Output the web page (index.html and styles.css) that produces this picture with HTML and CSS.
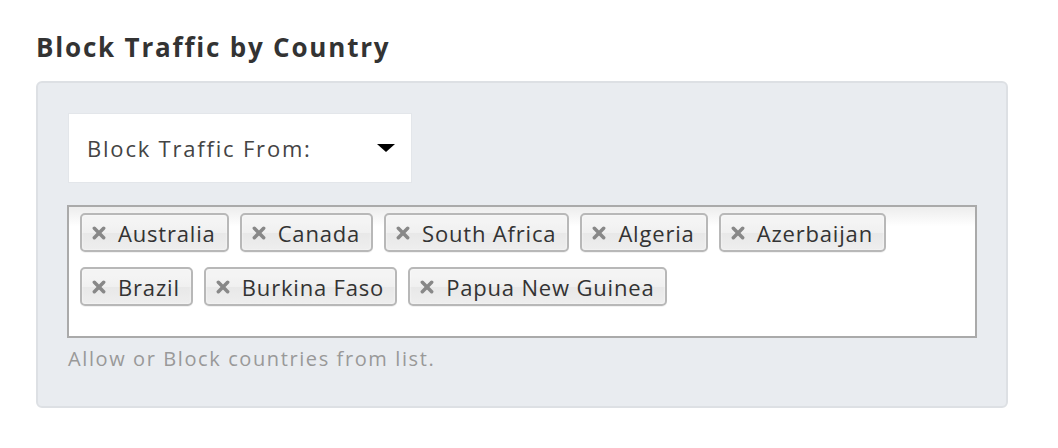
FILE: index.html
```html
<!DOCTYPE html>
<html>
<head>
<meta charset="utf-8">
<link rel="stylesheet" href="styles.css">
</head>
<body>
<h2 class="title">Block Traffic by Country</h2>
<div class="panel">
  <div class="select">
    <span class="select-label">Block Traffic From:</span>
    <span class="caret"></span>
  </div>
  <ul class="choices">
    <li class="choice"><svg class="x" viewBox="0 0 12 12"><path d="M2 2L10 10M10 2L2 10"/></svg>Australia</li>
    <li class="choice"><svg class="x" viewBox="0 0 12 12"><path d="M2 2L10 10M10 2L2 10"/></svg>Canada</li>
    <li class="choice"><svg class="x" viewBox="0 0 12 12"><path d="M2 2L10 10M10 2L2 10"/></svg>South Africa</li>
    <li class="choice"><svg class="x" viewBox="0 0 12 12"><path d="M2 2L10 10M10 2L2 10"/></svg>Algeria</li>
    <li class="choice"><svg class="x" viewBox="0 0 12 12"><path d="M2 2L10 10M10 2L2 10"/></svg>Azerbaijan</li>
    <li class="choice"><svg class="x" viewBox="0 0 12 12"><path d="M2 2L10 10M10 2L2 10"/></svg>Brazil</li>
    <li class="choice"><svg class="x" viewBox="0 0 12 12"><path d="M2 2L10 10M10 2L2 10"/></svg>Burkina Faso</li>
    <li class="choice"><svg class="x" viewBox="0 0 12 12"><path d="M2 2L10 10M10 2L2 10"/></svg>Papua New Guinea</li>
  </ul>
  <p class="help">Allow or Block countries from list.</p>
</div>
</body>
</html>
```
FILE: styles.css
```css
* { box-sizing: border-box; }
body {
  margin: 0;
  background: #fff;
  font-family: "Open Sans", "DejaVu Sans", sans-serif;
  color: #333;
}
.title {
  margin: 0;
  padding: 30px 0 0 36px;
  font-size: 26px;
  line-height: 34px;
  font-weight: 700;
  letter-spacing: 1.8px;
  color: #333;
}
.panel {
  margin: 17px 0 0 36px;
  width: 972px;
  height: 327px;
  background: #e9ecf0;
  border: 2px solid #dde0e4;
  border-radius: 6px;
  padding: 30px 0 0 30px;
}
.select {
  width: 344px;
  height: 70px;
  background: #fff;
  border: 1px solid #e3e6ea;
  display: flex;
  align-items: center;
  justify-content: space-between;
  padding: 0 16px 0 18px;
}
.select-label {
  font-size: 22px;
  letter-spacing: 1.8px;
  color: #444;
}
.caret {
  width: 0;
  height: 0;
  border-left: 9px solid transparent;
  border-right: 9px solid transparent;
  border-top: 8px solid #000;
}
.choices {
  list-style: none;
  margin: 22px 0 0 -1px;
  width: 910px;
  height: 133px;
  border: 2px solid #aaa;
  background: linear-gradient(#eeeeee 1%, #ffffff 15%);
  padding: 6px 11px 0 11px;
  display: flex;
  flex-wrap: wrap;
  align-content: flex-start;
  column-gap: 11px;
  row-gap: 15px;
}
.choice {
  height: 39px;
  display: flex;
  align-items: center;
  padding: 0 11px 0 10px;
  border: 2px solid #b8b8b8;
  border-radius: 5px;
  background: linear-gradient(#f4f4f4 20%, #f0f0f0 50%, #e8e8e8 52%, #eeeeee 100%);
  box-shadow: 0 0 2px #fff inset, 0 1px 0 rgba(0,0,0,0.05);
  font-size: 22px;
  letter-spacing: 0.82px;
  color: #333;
}
.x {
  width: 14px;
  height: 14px;
  margin-right: 12px;
  stroke: #888;
  stroke-width: 3;
  stroke-linecap: round;
  fill: none;
  flex: none;
}
.help {
  margin: 7px 0 0 0;
  font-size: 20px;
  letter-spacing: 1.6px;
  color: #999;
}
```
